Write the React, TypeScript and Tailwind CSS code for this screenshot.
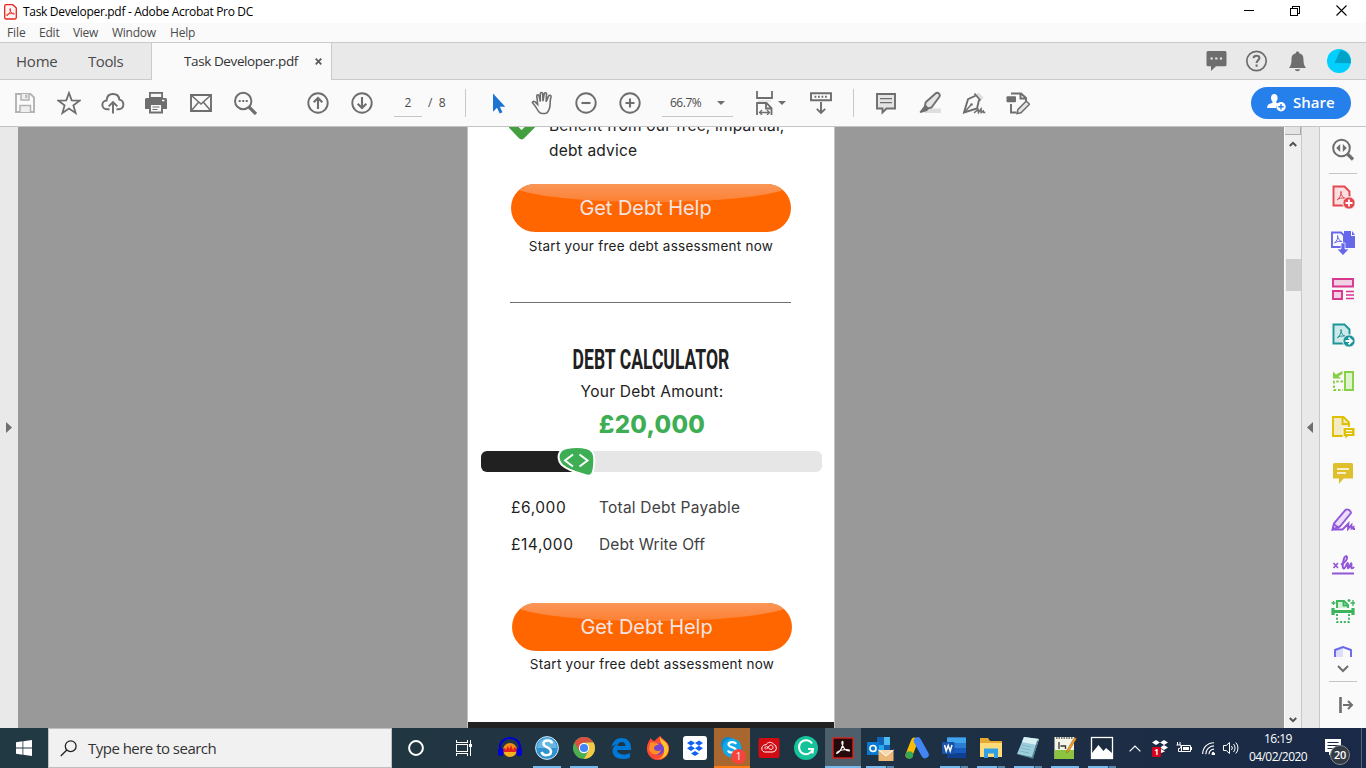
import React from "react";

type IconProps = { size?: number; className?: string; children: React.ReactNode };

const Icon = ({ size = 24, className = "", children }: IconProps) => (
  <svg width={size} height={size} viewBox={`0 0 ${size} ${size}`} fill="none" stroke="currentColor" strokeWidth="1.9" className={`shrink-0 ${className}`}>
    {children}
  </svg>
);

const ToolSlot = ({ children }: { children: React.ReactNode }) => (
  <div className="flex h-full w-11 shrink-0 items-center justify-center">{children}</div>
);

const TitleBar = () => (
  <div className="flex h-[23px] items-center bg-white">
    <svg width="13" height="16" viewBox="0 0 13 16" className="ml-1 shrink-0" fill="none" stroke="#e8251f">
      <path d="M2 .7h6.8l3.5 3.4v9.4a1.5 1.5 0 0 1-1.5 1.5H2A1.5 1.5 0 0 1 .7 13.5V2A1.4 1.4 0 0 1 2 .7z" strokeWidth="1.3" fill="#fff5f4" />
      <path d="M3 11.6c2-.8 3.6-3.700 3.500-6.300 0-1.400-1-1-.6.500.7 2.300 2.300 4.300 4 4.400 1-.2.4-1.100-1.400-1-2 .1-4.300.6-5.600 1.400-.6.600-.4 1.100.1 1z" strokeWidth=".9" />
    </svg>
    <span className="ml-1.5 whitespace-pre text-[12px] tracking-[-0.31px] text-black">Task Developer.pdf - Adobe Acrobat Pro DC</span>
    <div className="ml-auto flex h-full items-center pr-px pb-[2px] text-black">
      <div className="flex w-[46px] justify-center"><div className="h-px w-2.5 bg-black" /></div>
      <div className="flex w-[45px] justify-center">
        <svg width="10" height="10" viewBox="0 0 10 10" fill="none" stroke="#000" shapeRendering="crispEdges"><path d="M.5 2.5h7v7h-7zM2.500 2.500v-2h7v7h-2" /></svg>
      </div>
      <div className="flex w-[48px] justify-center">
        <svg width="11" height="11" viewBox="0 0 11 11" stroke="#000" strokeWidth="1.1"><path d="M.5.5l10 10M10.500.5l-10 10" /></svg>
      </div>
    </div>
  </div>
);

const MenuBar = () => (
  <div className="flex h-[19px] items-center bg-[#fafafa] text-[12px] leading-[18px] tracking-[-0.1px] text-[#4b4b4b]">
    <span className="ml-[7px] w-8">File</span>
    <span className="w-[34px] tracking-[-0.2px]">Edit</span>
    <span className="w-[39px] tracking-[-0.3px]">View</span>
    <span className="w-[58px] tracking-[-0.25px]">Window</span>
    <span className="tracking-[-0.2px]">Help</span>
  </div>
);

const TabBar = () => (
  <div className="flex h-[38px] border-t border-[#cacaca] bg-[#e9e9e9] text-[14px] text-[#4b4b4b]">
    <div className="flex w-[151px] items-center border-b border-[#cacaca]">
      <span className="ml-4 w-[72px] text-[15px] tracking-[-0.2px]">Home</span>
      <span className="text-[15px] tracking-[-0.4px]">Tools</span>
    </div>
    <div className="flex w-[181px] items-center border-x border-[#cacaca] bg-[#fafafa] pl-8">
      <span className="w-[131px] text-[13.500px] tracking-[-0.4px] whitespace-nowrap text-[#333]">Task Developer.pdf</span>
      <svg width="7" height="7" viewBox="0 0 8 8" stroke="#5a5a5a" strokeWidth="2"><path d="M.8.8l6.400 6.400M7.200.8L.8 7.200" /></svg>
    </div>
    <div className="flex flex-1 items-center justify-end border-b border-[#cacaca] text-[#6e6e6e]">
      <Icon className="mr-[17px]">
        <path d="M4 2h17a1.500 1.500 0 0 1 1.500 1.500v12.300a1.500 1.500 0 0 1-1.500 1.500H12L7 22v-4.700H4a1.500 1.500 0 0 1-1.500-1.500V3.500A1.500 1.500 0 0 1 4 2z" fill="currentColor" stroke="none" />
        <path d="M6.500 9.500h2.200m2.500 0h2.200m2.500 0h2.200" stroke="#e9e9e9" strokeWidth="2" />
      </Icon>
      <Icon className="mr-[17px]">
        <circle cx="11.500" cy="12" r="9.700" strokeWidth="1.700" />
        <path d="M8.500 9.200c.2-1.800 1.400-2.500 3-2.500 1.700 0 2.900.9 2.900 2.400 0 2.100-2.800 2.200-2.800 4.900M11.600 15.600v2.200" strokeWidth="2.100" />
      </Icon>
      <Icon className="mr-[17px]">
        <path d="M11.500 2.500c1 0 1.700.7 1.700 1.700 3.600.8 4.300 3.500 4.300 6.500 0 4 .6 5.500 2.500 8.300h-17C4.900 16.200 5.500 14.700 5.500 10.700c0-3 .7-5.700 4.300-6.500C9.800 3.200 10.500 2.500 11.500 2.500z" fill="currentColor" stroke="none" />
        <path d="M8.800 20.300h5.400c-.8 2.600-4.600 2.600-5.400 0z" fill="currentColor" stroke="none" />
      </Icon>
      <Icon className="mr-[15px]">
        <circle cx="12" cy="12" r="12" fill="#00cfff" stroke="none" />
        <path d="M13.500 1A12 12 0 0 1 23.800 14.300L7.500 14z" fill="#00a3c7" stroke="none" />
      </Icon>
    </div>
  </div>
);

const Toolbar = () => (
  <div className="flex h-[47px] items-center border-b border-[#c4c4c4] bg-[#fafafa] text-[#6e6e6e]">
    <div className="ml-[3px] flex h-full">
      <ToolSlot>
        <Icon className="text-[#b3b3b3]">
          <path d="M3 3h14.500L21 6.500V21H3z" /><path d="M8 3v6h8V3M7 21v-6.500h10.500V21" strokeWidth="1.500" fill="#eee" /><path d="M13.300 3.500v3.500" />
        </Icon>
      </ToolSlot>
      <ToolSlot><Icon><path d="M12 2l2.700 7.400 7.900.200-6.200 4.800 2.200 7.600L12 17.600 5.400 22l2.200-7.600L1.400 9.600l7.900-.2z" strokeWidth="1.800" /></Icon></ToolSlot>
      <ToolSlot><Icon><path d="M8.500 18.300H6A4.400 4.400 0 0 1 5.600 9.500C5.800 5 8.800 3 12 3c3.500 0 6 2.200 6.300 5.600a4.900 4.900 0 0 1-.3 9.700h-2.500M12 22.500V11.500M7.700 15.300L12 11l4.300 4.300" /></Icon></ToolSlot>
      <ToolSlot>
        <Icon className="-ml-[2px]">
          <path d="M5 1h14v6H5z" fill="currentColor" stroke="none" /><path d="M6.800 2.800h10.400V6H6.800z" fill="#fafafa" stroke="none" />
          <path d="M2.500 7h19a1.500 1.500 0 0 1 1.500 1.500V18H1V8.500A1.500 1.500 0 0 1 2.500 7z" fill="currentColor" stroke="none" />
          <path d="M18 9.500h2.500" stroke="#fafafa" strokeWidth="1.500" /><path d="M6 13h12v8.500H6z" fill="#fafafa" /><path d="M8.500 16h7M8.500 18.500h5" strokeWidth="1.200" />
        </Icon>
      </ToolSlot>
      <ToolSlot><Icon><path d="M2 4h20v16H2z" /><path d="M2.500 4.500L12 13l9.500-8.500M2.500 19.500l7-8.300M21.500 19.500l-7-8.300" strokeWidth="1.500" /></Icon></ToolSlot>
      <ToolSlot><Icon><circle cx="10.200" cy="10" r="8.200" strokeWidth="2" /><path d="M16 16l7 7" strokeWidth="3.200" /><path d="M5.700 10h2m1.500 0h2m1.500 0h2" strokeWidth="2" /></Icon></ToolSlot>
    </div>
    <div className="ml-[29px] flex h-full">
      <ToolSlot><Icon><circle cx="12" cy="12" r="9.700" strokeWidth="1.900" /><path d="M12 18V7M7.700 11.300L12 7l4.300 4.300" strokeWidth="2.100" /></Icon></ToolSlot>
      <ToolSlot><Icon><circle cx="12" cy="12" r="9.700" strokeWidth="1.900" /><path d="M12 6v11M7.700 12.700L12 17l4.300-4.300" strokeWidth="2.100" /></Icon></ToolSlot>
    </div>
    <div className="ml-[10px] flex h-[28px] w-7 items-center justify-center border-b border-[#c6c6c6] text-[12px] text-[#4b4b4b]">2</div>
    <span className="ml-[6px] w-[37px] whitespace-pre text-[12px] text-[#4b4b4b]">/  8</span>
    <div className="h-7 w-px bg-[#c8c8c8]" />
    <div className="ml-[10px] flex h-full">
      <ToolSlot><Icon><path d="M7 2.500v18.200l4-3.900 2.700 5.800 2.800-1.300-2.700-5.600h5.500z" fill="#1d73d2" stroke="none" /></Icon></ToolSlot>
      <ToolSlot>
        <Icon className="ml-[2px]"><path d="M9.300 22c-1.500-.9-2.300-2-3.600-4.500-1.400-2.600-2.800-4-4-5.400-.8-1.100.7-2.300 2-1.500 1.300.9 2 1.900 3 2.900L5.800 5.200c-.1-1.700 1.900-1.900 2.200-.3L9.300 10.500V2.700c0-1.700 2.300-1.700 2.400 0L12 10.200l1.200-7.400c.3-1.600 2.500-1.200 2.300.4l-.4 7.500 2.500-5.600c.6-1.500 2.800-.8 2.400.8-.9 2.500-.9 4.500-.9 7 0 3.500-1 6.500-3.300 9-2 .8-4.500.8-6.500.1z" strokeWidth="1.600" /></Icon>
      </ToolSlot>
      <ToolSlot><Icon><circle cx="12" cy="12" r="9.700" /><path d="M7.500 12h9" strokeWidth="2.100" /></Icon></ToolSlot>
      <ToolSlot><Icon><circle cx="12" cy="12" r="9.700" /><path d="M7.500 12h9M12 7.500v9" strokeWidth="2.100" /></Icon></ToolSlot>
    </div>
    <div className="ml-[10px] flex h-[28px] w-[71px] items-center border-b border-[#c6c6c6] text-[12px] text-[#4b4b4b]">
      <span className="ml-2 w-[47px] tracking-[-0.5px]">66.7%</span>
      <svg width="8" height="4" viewBox="0 0 8 4" fill="#6e6e6e"><path d="M0 0h8L4 4z" /></svg>
    </div>
    <div className="ml-[20px] flex h-full items-center">
      <Icon>
        <path d="M4 0v7h15V0M4 24V12h9.500l5 5V24M13 12.500v5h5.500" strokeWidth="1.800" /><path d="M5 10h13" stroke="#ddd" strokeWidth="1.300" /><path d="M6.500 21.500h10M9 19l-2.500 2.500L9 24M14 19l2.500 2.500L14 24" strokeWidth="1.300" />
      </Icon>
      <svg width="8" height="4" viewBox="0 0 8 4" fill="#6e6e6e" className="ml-px"><path d="M0 0h8L4 4z" /></svg>
    </div>
    <div className="ml-[13px] flex h-full"><ToolSlot>
      <Icon><path d="M2 2.200h20v7H2z" /><path d="M5.500 5.700h13" strokeWidth="2" strokeDasharray="1.800 1.700" /><path d="M12 11v11M7.800 17.800L12 22l4.200-4.200" /></Icon>
    </ToolSlot></div>
    <div className="ml-[10px] h-7 w-px bg-[#c8c8c8]" />
    <div className="ml-[10px] flex h-full">
      <ToolSlot><Icon><path d="M3 3h18v14.500h-8.500L8.500 21.500v-4H3z" fill="#e4e4e4" /><path d="M6 7.700h12M6 11.700h12" strokeWidth="1.200" /></Icon></ToolSlot>
      <ToolSlot><Icon><path d="M9 17.500h14V22H6z" fill="#dedede" stroke="none" /><path d="M17.500 2.500c1.200-1 2.500-.8 3.500.1 1 1 1 2.200.2 3.400L13.500 16.500l-3.500 1-3-3 .7-3.200z" fill="#e4e4e4" /><path d="M6.500 14.500l4 4-1.500 1.500-6.300 2-1.200-1z" fill="currentColor" stroke="none" /></Icon></ToolSlot>
      <ToolSlot><Icon><path d="M13.500 4l3-2.500 5 5-2.500 3z" fill="#dedede" stroke="none" /><path d="M12.500 2.500l6 7M14 4.500L6 8.200 2 21.500l13-4 2-8.500" /><path d="M2 21.500l7-7.500" strokeWidth="1.500" /><circle cx="9.500" cy="13.500" r="1.300" fill="currentColor" stroke="none" /><path d="M12 22l4-3.500.5 3 2.500-3.500.3 3.500 2-1.500.5 1.500h1.500" strokeWidth="1.600" /></Icon></ToolSlot>
      <ToolSlot><Icon><path d="M5 2.500h10l5 4.500v3M14.500 2.500v5h5M5 13v8.500h5.500" /><rect x=".5" y="5.300" width="9.500" height="6" rx="1" fill="currentColor" stroke="none" /><path d="M11 22.500l1-4L20.300 10l3.200 3.200-8.500 8.500z" fill="#e4e4e4" strokeWidth="1.500" /></Icon></ToolSlot>
    </div>
    <button className="mr-[15px] ml-auto flex h-8 w-[100px] items-center rounded-full bg-[#2680eb] pl-4 text-[15px] font-semibold text-white">
      <svg width="19" height="18" viewBox="0 0 19 18" fill="#fff"><path d="M7.300 0c2 0 3.300 1.400 3.300 3.700 0 1.700-.6 2.800-1.300 3.800v1.300l3 1C10 11 9 12 9 14H.2c0-3.200 1-4 5.300-5.200V7.500C4.600 6.600 4 5.400 4 3.700 4 1.400 5.300 0 7.300 0z" /><circle cx="14" cy="12.700" r="4.700" /><path d="M14 10v5.400M11.300 12.700h5.400" stroke="#2680eb" strokeWidth="1.400" /></svg>
      <span className="-mt-[2px] ml-[7px]">Share</span>
    </button>
  </div>
);

const HelpButton = () => (
  <div className="relative flex h-12 w-[280px] items-center justify-center overflow-hidden rounded-full bg-[#ff6600] pr-[11px]">
    <div className="absolute -top-[18px] left-[0px] h-[36px] w-[280px] rounded-[50%] bg-linear-to-b from-[#fa9657] from-50% to-[#fc8030]" />
    <span className="relative font-['Inter'] text-[20px] tracking-[-0.05px] text-[#f2e4e4]">Get Debt Help</span>
  </div>
);

const DocumentPage = () => (
  <div className="relative flex h-full w-[368px] flex-col overflow-hidden border-x border-[#c4c4c4] bg-white font-['Inter',sans-serif] text-[#212121]">
    <div className="-mt-[14px] flex h-[71px] shrink-0 pl-[42px]">
      <svg width="28" height="28" viewBox="0 0 28 28" fill="none" stroke="#44a03f" strokeWidth="7.500" className="-ml-px"><path d="M2 11.500l10.500 11L27 8" strokeLinejoin="round" /></svg>
      <div className="ml-[12px] text-[15.500px] leading-[25px] tracking-[0.19px]"><div className="whitespace-nowrap">Benefit from our free, impartial,</div><div>debt advice</div></div>
    </div>
    <div className="flex shrink-0 flex-col pl-[43px]">
      <HelpButton />
      <span className="mt-[3px] h-[22px] w-[280px] text-center text-[13.500px] leading-[22px] tracking-[0.26px] whitespace-nowrap">Start your free debt assessment now</span>
      <div className="mt-[45px] -ml-px h-px w-[281px] bg-[#6f6f6f]" />
    </div>
    <h1 className="mt-[41px] flex h-[32px] shrink-0 items-center justify-center font-['Roboto'] text-[28px] leading-8 font-bold whitespace-nowrap"><span className="scale-x-[0.627]">DEBT CALCULATOR</span></h1>
    <div className="mt-[4px] h-[24px] shrink-0 pl-[2px] text-center text-[15.500px] leading-6 tracking-[0.25px]">Your Debt Amount:</div>
    <div className="mt-[5px] h-8 shrink-0 pl-[2px] text-center text-[24px] leading-8 font-extrabold tracking-[0.3px] text-[#3dae54]">£20,000</div>
    <div className="relative mt-[10px] ml-[13px] flex h-[21px] w-[341px] shrink-0 rounded-[6px] bg-[#e6e6e6]">
      <div className="h-full w-[96px] rounded-l-[6px] bg-[#212121]" />
      <svg width="40" height="32" viewBox="0 0 40 32" className="absolute -top-[4px] left-[75px]" fill="none">
        <path d="M11 1C18-.3 25-.2 31 1.200c5 1.200 7.300 5.300 7.300 11.300 0 5 0 9.500-2 14-1.500 3-4.500 2.500-7.500 1.400C22 26 12 23.500 6 18 .5 12 1.500 2.500 11 1z" fill="#3dae54" stroke="#fff" strokeWidth="2" />
        <path d="M17 7.500L9 13.500l8 6M23.500 7.500l8 6-8 6" stroke="#fff" strokeWidth="2" />
      </svg>
    </div>
    <div className="mt-[24px] grid shrink-0 grid-cols-[88px_1fr] pl-[43px] text-[15.500px] leading-[24px] tracking-[0.22px]">
      <span className="tracking-[0.55px]">£6,000</span><span className="text-[#414141]">Total Debt Payable</span>
      <span className="mt-[13px] tracking-[0.55px]">£14,000</span><span className="mt-[13px] tracking-[0.1px] text-[#414141]">Debt Write Off</span>
    </div>
    <div className="mt-[46px] flex shrink-0 flex-col pl-[44px]">
      <HelpButton />
      <span className="mt-[2px] h-[22px] w-[280px] text-center text-[13.500px] leading-[22px] tracking-[0.26px] whitespace-nowrap">Start your free debt assessment now</span>
    </div>
    <div className="mt-auto h-[6px] shrink-0 bg-[#212121]" />
  </div>
);

const SideSlot = ({ children }: { children: React.ReactNode }) => (
  <div className="flex h-[46px] shrink-0 items-center justify-center">{children}</div>
);

const PdfSheet = ({ fill }: { fill: string }) => (
  <>
    <path d="M2.500 1.500h11l5 5v14h-16z" fill={fill} />
    <path d="M6 15c3-2 4.500-5.500 4-9M10 7c0 3.500 2 6 5 6.500M6 15c2-2 5-2.500 9-1.500" strokeWidth="1" />
  </>
);

const SidePanel = () => (
  <div className="flex w-[46px] flex-col bg-[#fafafa]">
    <SideSlot><Icon className="text-[#6e6e6e]"><circle cx="10.500" cy="10" r="8.300" strokeWidth="2" /><path d="M16.500 16l5.500 5.500" strokeWidth="3.200" /><path d="M9.200 6v8l-4-4zM11.800 6v8l4-4z" fill="currentColor" stroke="none" /></Icon></SideSlot>
    <div className="mx-auto h-px w-7 bg-[#c6c6c6]" />
    <SideSlot><Icon className="text-[#e34850]"><PdfSheet fill="#f9dfe0" /><circle cx="18" cy="18" r="6.200" fill="currentColor" stroke="#fafafa" strokeWidth="1" /><path d="M18 14.500v7M14.500 18h7" stroke="#fff" strokeWidth="1.800" /></Icon></SideSlot>
    <SideSlot><Icon className="text-[#6767ec]"><path d="M13 0h7v5h4v12H13z" fill="currentColor" stroke="none" /><path d="M21 0v4h3z" fill="currentColor" stroke="none" /><path d="M1 1.500h9l3 3V16H1z" fill="#fafafa" /><path d="M3.500 12C6 9.500 7 8 6.500 4.500c.5 3.500 2 5.500 4.500 6-3-.5-5 0-7.500 1.500z" strokeWidth="1" /><path d="M10 12h4v6h4l-6 6.500L6 18h4z" fill="currentColor" stroke="#fafafa" strokeWidth=".7" /></Icon></SideSlot>
    <SideSlot><Icon className="text-[#d83790]"><path d="M2 2h20v7.500H2zM2 14h9v8H2z" fill="#f3d1e4" /><path d="M15 14.500h8M15 18h8M15 21.500h8" strokeWidth="1.300" /></Icon></SideSlot>
    <SideSlot><Icon className="text-[#1b959a]"><PdfSheet fill="#cfe8e9" /><circle cx="18" cy="18" r="6.200" fill="currentColor" stroke="#fafafa" strokeWidth="1" /><path d="M14.500 18h5M17.500 14.700L21 18l-3.500 3.300" stroke="#fff" strokeWidth="1.800" /></Icon></SideSlot>
    <SideSlot><Icon className="text-[#85d044]"><path d="M14 3h8v18h-8z" fill="#dff3cd" /><path d="M12 12.500H3v8.500h9" strokeDasharray="2.500 1.800" /><path d="M2 2.500V9.500h8L7.500 7.200l4-2.200V2L5 5.500z" fill="currentColor" stroke="none" /></Icon></SideSlot>
    <SideSlot><Icon className="text-[#dfbf00]"><path d="M2 2h10.500L18 7.500V21H2z" fill="#f2ebc3" /><path d="M11.500 2v7H18" /><path d="M12 12.500h12v9h-7l-3 3v-3h-2z" fill="currentColor" stroke="#fafafa" strokeWidth="1" /><path d="M15 15.700h6M15 18.500h6" stroke="#fff" strokeWidth="1.200" /></Icon></SideSlot>
    <SideSlot><Icon className="text-[#dfbf2b]"><path d="M3.500 2h17a1.500 1.500 0 0 1 1.500 1.500v14h-9.500L8 23v-5.500H2v-14A1.500 1.500 0 0 1 3.500 2z" fill="currentColor" stroke="none" /><path d="M6 8h12M6 12h9" stroke="#fff" strokeWidth="1.500" /></Icon></SideSlot>
    <SideSlot><Icon className="text-[#9256d9]"><path d="M1.500 22.500l1.500-6L14.500 3c1.500-1.500 5.500.3 5.500 3L9 19.500z" fill="#e9ddf7" /><path d="M2.500 17l5.500 4M1 22.500h10.500l6-6-.5 5.500 3.500-4v3.500l2-1.500v2h2" strokeWidth="1.800" /></Icon></SideSlot>
    <SideSlot><Icon className="text-[#9256d9]"><path d="M1 20.500h22" strokeWidth="2" /><path d="M2.500 10l4.500 5M7 10l-4.500 5" strokeWidth="1.700" /><path d="M10 11.500c4.500-2 6.500-5.500 6-7.500-.7-1.500-2.300-.8-3 1.500-1.200 4-2 9.500-.2 10 1.700 0 2.500-5 4-5.500 1 .2-1 4.700.5 5.300 1.400 0 1.800-4.600 3-5 .8.300-.8 4.500.5 5 .8.200 1.600-.5 2.200-1.300" strokeWidth="2" /></Icon></SideSlot>
    <SideSlot><Icon className="text-[#3bb55b]"><path d="M6 9V2h7l4 4v3" fill="#d6f0dc" /><path d="M12.500 2v4.500H17" /><path d="M2 9v7M22 9v7M1 12.500h22" strokeWidth="3.200" /><path d="M6 15v8h12v-8" strokeDasharray="2 1.700" /><path d="M2.500 2v4M.5 4h4M18 0v3M16.500 1.500h3M22 1v6M19.500 4h5" strokeWidth="1.300" /></Icon></SideSlot>
    <div className="flex h-[23px] items-end justify-center"><svg width="20" height="11" viewBox="0 0 20 11"><path d="M2 11V4l8-3v10z" fill="#dedefa" /><path d="M2 11V4l8-3 8 3v7" fill="none" stroke="#6767ec" strokeWidth="1.900" /></svg></div>
    <div className="flex h-6 items-center justify-center"><svg width="12" height="8" viewBox="0 0 12 8" fill="none" stroke="#6e6e6e" strokeWidth="2"><path d="M1 1l5 5 5-5" /></svg></div>
    <div className="mx-auto h-px w-7 shrink-0 bg-[#c6c6c6]" />
    <SideSlot><svg width="16" height="16" viewBox="0 0 16 16" className="ml-1.5" fill="none" stroke="#6e6e6e"><path d="M2.500 0v16" strokeWidth="2.600" /><path d="M5 8h8M10 4l4 4-4 4" strokeWidth="2" /></svg></SideSlot>
  </div>
);

const Workspace = () => (
  <div className="flex h-[601px]">
    <div className="flex w-[18px] items-center bg-[#e9e9e9]"><svg width="6" height="11" viewBox="0 0 6 11" fill="#6e6e6e" className="ml-[6px]"><path d="M0 0v11l6-5.500z" /></svg></div>
    <div className="flex w-[1266px] justify-center bg-[#999]"><DocumentPage /></div>
    <div className="flex w-[17px] flex-col items-center border-l border-[#fafafa] bg-[#f0f0f0]">
      <div className="h-2 w-full border-r border-b border-[#aaa] bg-[#e4e4e4]" />
      <svg width="8" height="6" viewBox="0 0 8 6" fill="none" stroke="#505050" strokeWidth="2" className="mt-[6px] mr-px"><path d="M.8 5L4 1.800 7.200 5" /></svg>
      <div className="mt-[112px] h-8 w-[15px] bg-[#cdcdcd]" />
      <svg width="8" height="6" viewBox="0 0 8 6" fill="none" stroke="#505050" strokeWidth="2" className="mt-auto mr-px mb-[5px]"><path d="M.8 1L4 4.200 7.200 1" /></svg>
    </div>
    <div className="flex w-[19px] items-center border-x border-[#c8c8c8] bg-[#e9e9e9]"><svg width="6" height="11" viewBox="0 0 6 11" fill="#6e6e6e" className="ml-[5px]"><path d="M6 0v11L0 5.500z" /></svg></div>
    <SidePanel />
  </div>
);

const TaskApp = ({ children, running = false, stacked = false, className = "" }: { children: React.ReactNode; running?: boolean; stacked?: boolean; className?: string }) => (
  <div className={`relative mr-px flex h-10 w-9 shrink-0 items-center justify-center ${className}`}>
    <svg width="24" height="24" viewBox="0 0 24 24" className="overflow-visible">{children}</svg>
    {running && <div className="absolute bottom-0 left-1 flex h-0.5 w-7 bg-[#76b9ed]">{stacked && <div className="ml-auto w-2 border-l border-[#2c4a63] bg-[#5587af]" />}</div>}
  </div>
);

const TaskApps = () => (
  <div className="ml-[11px] flex">
    <TaskApp>
      <circle cx="12" cy="14" r="7" fill="#f28c1c" /><path d="M5 13l2-1 1 2 1.500-4 2 3 1.500-4 2 5 1.500-3L19 13v2l-2 1-1.500 2-2-2-2 2-2-2-2 1-2.500-2z" fill="#e0201c" /><path d="M6 16h12c-1 6-11 6-12 0z" fill="#f5b21b" />
      <path d="M2 16V11a10 9 0 0 1 20 0v5" fill="none" stroke="#0000d8" strokeWidth="2.200" /><rect x="0" y="12" width="5.500" height="8" rx="2.500" fill="#0000d8" /><rect x="18.500" y="12" width="5.500" height="8" rx="2.500" fill="#0000d8" />
    </TaskApp>
    <TaskApp running>
      <circle cx="12" cy="12" r="11.400" fill="#2f93cf" stroke="#d6e9f4" /><path d="M2 12a10 10 0 0 1 20 0z" fill="#65b6e2" />
      <path d="M17 7.500c-.5-4-8.500-4-8.500.500 0 3.500 7.500 3 7.500 7.500S8 20.500 6.500 16" fill="none" stroke="#fff" strokeWidth="2.500" />
    </TaskApp>
    <TaskApp running>
      <circle cx="12" cy="12" r="11" fill="#4caf50" /><path d="M2.500 6.500A11 11 0 0 1 21.500 6.500H12L7 15z" fill="#d95040" /><path d="M21.500 6.500A11 11 0 0 1 12 23l5-9-3-7.500z" fill="#f6c945" /><circle cx="12" cy="12" r="5.200" fill="#fff" /><circle cx="12" cy="12" r="4.100" fill="#4285f4" />
    </TaskApp>
    <TaskApp><path d="M2.500 11C4 5 7.500 2 12.500 2 19 2 22 6.500 22 12v2H8c.5 3 3.500 4.500 7 4.500 2.500 0 4.500-.6 6-1.500v4.500c-2 1-4.500 1.500-7 1.500C7 23 3.500 19.500 3.500 15c0-3.500 2-6 5-7-3 .5-4.800 1.500-6 3zm6-1h8c-.2-2.500-1.500-4-4-4-2 0-3.500 1.500-4 4z" fill="#0078d7" fillRule="evenodd" /></TaskApp>
    <TaskApp>
      <path d="M3 5c1-1.500 1-2 1.500-3 1 2 3 3 4 3C10 3 12 2 14 0c2 3 7 5 8.500 9C25 16 20 24 12 24S-1 16 1.500 8.500z" fill="#ff4a36" /><path d="M14 0c0 4 6 4 8 10 2 7-3 13-10 13 4-1 7-5 6-10S13 6 14 0z" fill="#ffc32b" /><circle cx="12" cy="13" r="6" fill="#7547d1" /><path d="M4 7c4-2 6 0 9 1-2 2-5 1-5 4s4 4 7 2c-2 7-11 5-12-1z" fill="#ff8f24" />
    </TaskApp>
    <TaskApp><rect width="24" height="24" rx="3" fill="#fff" /><path d="M8 4.500l4 2.600-4 2.600-4-2.600zm8 0l4 2.600-4 2.600-4-2.600zM8 9.700l4 2.600-4 2.600-4-2.600zm8 0l4 2.600-4 2.600-4-2.600zM12 14.900l4 2.600-4 2.600-4-2.600z" fill="#0f62f2" /></TaskApp>
    <div className="relative mr-px flex h-10 w-9 shrink-0 items-center justify-center border-b-2 border-[#ff7a0f] bg-[#a96730]">
      <svg width="24" height="24" viewBox="0 0 24 24" className="mt-px"><circle cx="8" cy="8" r="7" fill="#0b88ce" /><circle cx="16" cy="16" r="7" fill="#0b88ce" /><circle cx="12" cy="12" r="9.500" fill="#11a9e7" /><path d="M16 8c-1-2.500-7.500-2.500-7.500.6 0 3 7.500 2.200 7.500 5.500S9 17.500 8 14.500" fill="none" stroke="#fff" strokeWidth="2.200" /></svg>
      <span className="absolute right-[4px] bottom-[2px] flex h-[15px] w-[15px] items-center justify-center rounded-full bg-[#f4443c] text-[10px] text-white">1</span>
    </div>
    <TaskApp><rect x="1.500" y="2" width="21" height="20" rx="2" fill="#d30b12" /><path d="M7.500 16h8.500a4 4 0 0 0 .5-7.800C14.500 5.200 10.500 6 9 8.800c-4.500-.5-6 6-1.500 7.200M9.500 13.200l3-3.500c2.500-2 5 2 2.500 3.500-2 1-3.500-1.500-5-2.500-1.500-.5-3 1.500-1.500 2.500" fill="none" stroke="#fff" strokeWidth="1" /></TaskApp>
    <TaskApp><circle cx="12" cy="12" r="12" fill="#15c39a" /><path d="M18 7.500A7 7 0 1 0 18.800 13H14m5 0l-.5 4.500" fill="none" stroke="#fff" strokeWidth="2" /></TaskApp>
    <TaskApp running className="bg-[#4d5f6b] before:absolute before:bottom-0 before:h-0.5 before:w-9 before:bg-[#76b9ed]"><rect x="2" y="2" width="20" height="20" fill="#26090b" stroke="#e0211b" strokeWidth="1.300" /><path d="M6 17.500c3-1.500 6-7 6-11 0-2-1.500-1.300-1 1C12 12 15 15 18 15c1-.5.5-1.500-2-1.500-3 0-7 .7-9.500 2.500-1 1-.8 1.600-.5 1.500z" fill="none" stroke="#fff" strokeWidth="1.200" /></TaskApp>
    <TaskApp running stacked><path d="M9 1h13v17H9z" fill="#28a8ea" /><path d="M9 1h7v8H9zM16 9h6v8h-6z" fill="#1163b5" /><path d="M16 1h6v8h-6z" fill="#4ebcf0" /><rect x="-1" y="6" width="12" height="13" fill="#0878d0" /><circle cx="5" cy="12.500" r="3" fill="none" stroke="#fff" strokeWidth="1.700" /><path d="M10.500 14h15v11h-15z" fill="#ecb878" /><path d="M10.500 14l7.500 6 7.500-6" fill="#f7d8a9" stroke="#fff" /></TaskApp>
    <TaskApp><path d="M9.500 5L4 19" stroke="#fbbc04" strokeWidth="7" strokeLinecap="round" /><path d="M12.500 5L20 18.500" stroke="#4285f4" strokeWidth="7.500" strokeLinecap="round" /><circle cx="4.500" cy="19" r="3.700" fill="#34a853" /></TaskApp>
    <TaskApp running stacked><rect x="5" y="1.500" width="19" height="20.500" rx="1.500" fill="#2b7cd3" /><path d="M5 1.500h19v5.500H5z" fill="#41a5ee" /><path d="M5 12h19v5H5z" fill="#185abd" /><path d="M5 17h19v5H5z" fill="#103f91" /><rect y="6" width="12.500" height="12" rx="1" fill="#1753aa" /><path d="M2.500 9l1.700 6L6.200 9.500 8.200 15 10 9" fill="none" stroke="#fff" strokeWidth="1.500" /></TaskApp>
    <TaskApp running stacked><path d="M1 2h8l2 3h12v16H1z" fill="#e8a832" /><path d="M1 7h22v14H1z" fill="#fddc79" /><path d="M5 22v-9.500h14V22h-4v-4.500H9V22z" fill="#31a0e5" /></TaskApp>
    <TaskApp running stacked><path d="M8 1l15 2-6 19-16-4z" fill="#9dcedc" /><path d="M8 1l15 2-2 6L6 6z" fill="#d8f0f4" /><path d="M1 18l15 3 5-16 2-2-6 20z" fill="#507e8b" /><path d="M6 9l9 2M5 12l9 2M4 15l9 2" stroke="#7db7c9" /></TaskApp>
    <TaskApp running><path d="M1.500 1H21v22H1.500z" fill="#f2f5e8" /><path d="M1.500 14H21v9H1.500z" fill="#8bc53f" /><path d="M3 2h17" stroke="#555" strokeWidth="1.500" strokeDasharray="1.500 1" /><path d="M6 6v7M7.500 10h5v3" stroke="#333" strokeWidth="1.300" fill="none" /><path d="M14 14L21.500 1.500l2 1L16 15l-2.500 2z" fill="#f1a327" stroke="#9a4c21" strokeWidth=".5" /></TaskApp>
    <TaskApp running stacked><rect x="1.500" y="1.500" width="21" height="21" fill="#1b2c40" stroke="#fff" strokeWidth="1.300" /><path d="M2 17l6.500-8 5 6 2.500-3 6 5v5.500H2z" fill="#fff" /></TaskApp>
  </div>
);

const Taskbar = () => (
  <div className="flex h-10 items-center bg-linear-to-r from-[#213942] via-[#203441] to-[#1a2947] text-white">
    <div className="flex w-12 shrink-0 justify-center"><svg width="16" height="16" viewBox="0 0 16 16" fill="#fff"><path d="M0 2.300l6.500-1V7.600H0zM7.300 1.200L16 0v7.600H7.300zM0 8.400h6.500v6.300l-6.500-1zM7.300 8.400H16V16l-8.700-1.200z" /></svg></div>
    <div className="flex h-10 w-[344px] shrink-0 items-center border border-[#bfbfbf] bg-[#f1f1f1] pl-[11px]">
      <svg width="17" height="17" viewBox="0 0 17 17" fill="none" stroke="#222" strokeWidth="1.300"><circle cx="10.700" cy="6.200" r="5.400" /><path d="M6.800 10L.8 16" /></svg>
      <span className="ml-[11px] text-[15px] tracking-[-0.52px] text-[#333]">Type here to search</span>
    </div>
    <div className="flex w-[48px] shrink-0 justify-center"><svg width="16" height="16" viewBox="0 0 16 16" fill="none" stroke="#fff" strokeWidth="2"><circle cx="8" cy="8" r="6.900" /></svg></div>
    <div className="ml-[-1px] flex w-[42px] shrink-0 justify-end"><svg width="34" height="16" viewBox="0 0 34 16" fill="none" stroke="#fff" shapeRendering="crispEdges"><path d="M9.500 0v2.500h11V0M9.500 4.500h11v7h-11zM9.500 16v-2.500h11V16M23.500 0v16" /><path d="M22 4h3v3h-3z" fill="#fff" stroke="none" /></svg></div>
    <TaskApps />
    <div className="ml-[8px] flex items-center">
      <svg width="12" height="7" viewBox="0 0 12 7" fill="none" stroke="#fff" strokeWidth="1.200"><path d="M.6 6.400L6 1l5.400 5.400" /></svg>
      <div className="relative ml-[11px] h-4 w-4">
        <svg width="16" height="16" viewBox="0 0 16 16" fill="#fff"><path d="M4 0l4 2.500-4 2.500L0 2.500zm8 0l4 2.500L12 5 8 2.500zM12 5l4 2.500-4 2.500-4-2.500zM9 9l4 2.500L9 13z" /></svg>
        <span className="absolute bottom-[-1px] left-0 flex h-[10px] w-[9px] items-center justify-center rounded-[1px] bg-[#d6001c] text-[8px] font-bold">1</span>
      </div>
      <svg width="16" height="12" viewBox="0 0 16 12" fill="none" stroke="#fff" className="ml-[8px]"><path d="M5.500 3.500h9v6h-9z" /><path d="M7 5h6v3H7zM15 5h1v3h-1z" fill="#fff" stroke="none" /><path d="M1.500 0v3M4 0v3M.5 3h4.500v2L4 6.500H2.500v3h3" /></svg>
      <svg width="13" height="13" viewBox="0 0 13 13" fill="none" stroke="#fff" strokeWidth="1.100" className="ml-[10px]"><path d="M.7 12C.7 5.500 5.500.7 12 .7M3.800 12.200c0-4.600 3.600-8.300 8.200-8.300M7 12.300c0-3 2-5.200 5-5.200M10 12.500c0-1.500.7-2.200 2-2.300" /><circle cx="11.500" cy="12" r="1" fill="#fff" /></svg>
      <svg width="16" height="14" viewBox="0 0 16 14" fill="none" stroke="#fff" className="ml-[8px]"><path d="M.5 4.500h2.700L6.500 1.500v11L3.200 9.500H.5zM8.500 5a3 3 0 0 1 0 4M10.500 3a6 6 0 0 1 0 8M12.800 1.500a8 8 0 0 1 0 11" /></svg>
    </div>
    <div className="ml-[6px] flex w-[66px] flex-col items-center text-[12px] leading-[18px] tracking-[-0.55px]"><span>16:19</span><span>04/02/2020</span></div>
    <div className="relative ml-[13px] h-6 w-[26px]">
      <svg width="16" height="17" viewBox="0 0 16 17" fill="#fff" className="mt-[3px] ml-[1px]"><path d="M0 0h16v13H7l-3 3.500V13H0z" /><path d="M2.500 3.500h11M2.500 6.500h11M2.500 9.500h5" stroke="#1a2947" /></svg>
      <span className="absolute top-[9px] left-[6px] flex h-[20px] w-[20px] items-center justify-center rounded-full border border-[#8a8a8a] bg-[#333b45] text-[11px] font-semibold tracking-[-0.2px]">20</span>
    </div>
    <div className="ml-auto h-10 w-[5px] border-l border-[#58657c]" />
  </div>
);

export default function App() {
  return (
    <div className="flex h-[768px] w-[1366px] flex-col overflow-hidden font-['Open_Sans','Noto_Sans',sans-serif]">
      <TitleBar />
      <MenuBar />
      <TabBar />
      <Toolbar />
      <Workspace />
      <Taskbar />
    </div>
  );
}
